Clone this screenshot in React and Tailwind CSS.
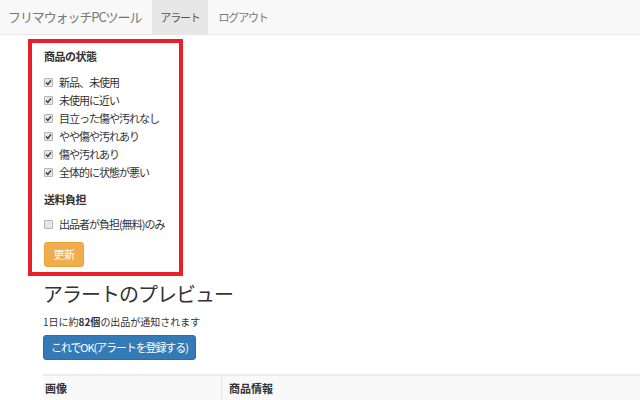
const font = { fontFamily: '"Noto Sans CJK JP", "Liberation Sans", sans-serif' };

const Check = ({ checked }) => (
  <span className="inline-flex items-center justify-center w-[9px] h-[9px] rounded-[1px] border border-[#b5b5b5] bg-[#e6e6e6] mr-[6px] shrink-0">
    {checked && (
      <svg width="7" height="7" viewBox="0 0 7 7">
        <path d="M1 3.6 L2.8 5.4 L6 1.4" fill="none" stroke="#333" strokeWidth="1.4" />
      </svg>
    )}
  </span>
);

const conditions = [
  '新品、未使用',
  '未使用に近い',
  '目立った傷や汚れなし',
  'やや傷や汚れあり',
  '傷や汚れあり',
  '全体的に状態が悪い',
];

const Row = ({ label, checked }) => (
  <div className="flex items-center h-[18px] text-[11px] text-[#333] tracking-[-1px]">
    <Check checked={checked} />
    <span>{label}</span>
  </div>
);

export default function App() {
  return (
    <div className="w-[640px] h-[400px] overflow-hidden bg-white" style={font}>
      <nav className="h-[35px] bg-[#f8f8f8] border-b border-[#e7e7e7] flex items-stretch">
        <div className="pl-[8px] pr-[11px] flex items-center text-[13px] text-[#777] tracking-[-1.1px]">
          フリマウォッチPCツール
        </div>
        <div className="px-[8px] flex items-center bg-[#e7e7e7] text-[11px] text-[#555] tracking-[-1.2px]">アラート</div>
        <div className="px-[11px] flex items-center text-[11px] text-[#777] tracking-[-1.2px]">ログアウト</div>
      </nav>

      <div className="ml-[28px] mt-[4px] w-[155px] border-4 border-[#e8202a] pl-[12px] pt-[5px] pb-[5px]">
        <div className="text-[11px] font-bold text-[#333] h-[16px] flex items-center tracking-[-0.5px]">商品の状態</div>
        <div className="mt-[9px] flex flex-col">
          {conditions.map((c) => (
            <Row key={c} label={c} checked />
          ))}
        </div>
        <div className="mt-[10px] text-[11px] font-bold text-[#333] h-[16px] flex items-center tracking-[-0.5px]">送料負担</div>
        <div className="mt-[8px]">
          <Row label="出品者が負担(無料)のみ" checked={false} />
        </div>
        <button className="mt-[9px] h-[25px] w-[40px] rounded-[3px] bg-[#f0ad4e] border border-[#eea236] text-white text-[11px] tracking-[-0.5px]">
          更新
        </button>
      </div>

      <div className="pl-[43px]">
        <h1 className="mt-[7px] text-[20px] leading-[22px] text-[#333] tracking-[-1px]">アラートのプレビュー</h1>
        <p className="mt-[10px] text-[10px] leading-[14px] text-[#333]">
          1日に約<b>82個</b>の出品が通知されます
        </p>
        <button className="mt-[6px] h-[25px] px-[7px] rounded-[3px] bg-[#337ab7] border border-[#2e6da4] text-white text-[11px] tracking-[-1.1px]">
          これでOK(アラートを登録する)
        </button>
        <div className="mt-[14px] border-t-2 border-[#ececec] bg-[#f9f9f9] flex h-[26px] text-[11px] font-bold text-[#333]">
          <div className="w-[179px] pl-[2px] flex items-center border-r border-[#e5e5e5]">画像</div>
          <div className="pl-[7px] flex items-center">商品情報</div>
        </div>
      </div>
    </div>
  );
}
